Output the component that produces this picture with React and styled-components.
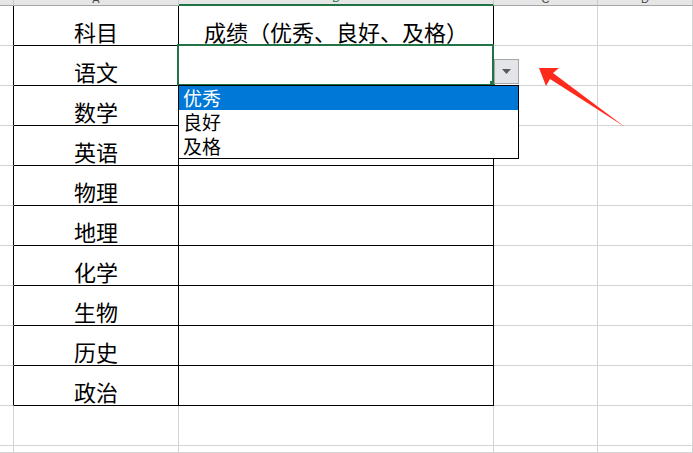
import styled, { createGlobalStyle } from 'styled-components';

const GlobalStyle = createGlobalStyle`
  html, body {
    margin: 0;
    padding: 0;
    background: #fff;
  }
  body {
    font-family: "Noto Sans CJK SC", "Noto Sans", sans-serif;
  }
`;

const Sheet = styled.div`
  position: relative;
  width: 693px;
  height: 453px;
  overflow: hidden;
  background: #fff;
`;

const Grid = styled.div`
  display: grid;
  grid-template-columns: 14px 165px 315px 104px 1fr;
  grid-template-rows: 6px repeat(11, 40px) 1fr;
  height: 100%;
`;

const ColHead = styled.div`
  box-sizing: border-box;
  background: #e6e6e6;
  border-right: 1px solid #c8c8c8;
  border-bottom: ${(p) => (p.$active ? '2px solid #217346' : '1px solid #a6a6a6')};
  overflow: hidden;
  display: flex;
  align-items: flex-end;
  justify-content: center;
  font: 11px/11px "Liberation Sans", Arial, sans-serif;
  color: ${(p) => (p.$active ? '#217346' : '#444')};
`;

const Cell = styled.div`
  box-sizing: border-box;
  border-right: 1px solid ${(p) => (p.$rightDark ? '#000' : '#d4d4d4')};
  border-bottom: 1px solid ${(p) => (p.$bottomDark ? '#000' : '#d4d4d4')};
  display: flex;
  align-items: flex-end;
  justify-content: center;
  padding-bottom: 3px;
  font-size: 22px;
  line-height: 22px;
  color: #000;
  white-space: nowrap;
  overflow: hidden;
`;

const Selection = styled.div`
  position: absolute;
  left: 177px;
  top: 44px;
  width: 317px;
  height: 42px;
  box-sizing: border-box;
  border: 2px solid #217346;
  pointer-events: none;
`;

const FillHandle = styled.div`
  position: absolute;
  left: 490px;
  top: 81px;
  width: 5px;
  height: 5px;
  background: #217346;
`;

const DropButton = styled.div`
  position: absolute;
  left: 494px;
  top: 59px;
  width: 25px;
  height: 25px;
  box-sizing: border-box;
  background: #e3e5e8;
  border: 1px solid #a6a6a6;
  display: flex;
  align-items: center;
  justify-content: center;
`;

const List = styled.ul`
  position: absolute;
  left: 178px;
  top: 85px;
  width: 341px;
  height: 74px;
  box-sizing: border-box;
  margin: 0;
  padding: 0;
  list-style: none;
  background: #fff;
  border: 1px solid #000;
`;

const Item = styled.li`
  height: 24px;
  padding-left: 4px;
  font-size: 19px;
  line-height: 24px;
  background: ${(p) => (p.$active ? '#0078d7' : 'transparent')};
  color: ${(p) => (p.$active ? '#fff' : '#000')};
`;

const Overlay = styled.svg`
  position: absolute;
  left: 0;
  top: 0;
  pointer-events: none;
`;

const subjects = ['语文', '数学', '英语', '物理', '地理', '化学', '生物', '历史', '政治'];
const options = ['优秀', '良好', '及格'];

function App() {
  const rows = [];
  // header row of the table plus the 9 subjects
  const tableRows = [{ a: '科目', b: '成绩（优秀、良好、及格）' }, ...subjects.map((s) => ({ a: s, b: '' }))];

  tableRows.forEach((r, i) => {
    rows.push(
      <Cell key={`s${i}`} $rightDark />,
      <Cell key={`a${i}`} $rightDark $bottomDark>{r.a}</Cell>,
      <Cell key={`b${i}`} $rightDark $bottomDark>{r.b}</Cell>,
      <Cell key={`c${i}`} />,
      <Cell key={`d${i}`} />
    );
  });

  for (let i = 0; i < 2; i++) {
    rows.push(
      <Cell key={`es${i}`} />,
      <Cell key={`ea${i}`} />,
      <Cell key={`eb${i}`} />,
      <Cell key={`ec${i}`} />,
      <Cell key={`ed${i}`} />
    );
  }

  return (
    <>
      <GlobalStyle />
      <Sheet>
        <Grid>
          <ColHead />
          <ColHead>A</ColHead>
          <ColHead $active>B</ColHead>
          <ColHead>C</ColHead>
          <ColHead>D</ColHead>
          {rows}
        </Grid>

        <Selection />
        <FillHandle />
        <DropButton>
          <svg width="9" height="5" viewBox="0 0 9 5">
            <path d="M0 0 H9 L4.5 5 Z" fill="#5a5a5a" />
          </svg>
        </DropButton>

        <List>
          {options.map((o, i) => (
            <Item key={o} $active={i === 0}>{o}</Item>
          ))}
        </List>

        <Overlay width="693" height="453" viewBox="0 0 693 453">
          <polygon
            points="539,68 559,68 553,73 625,127 550,79 546,86"
            fill="#fe2a1c"
          />
        </Overlay>
      </Sheet>
    </>
  );
}

export default App;
